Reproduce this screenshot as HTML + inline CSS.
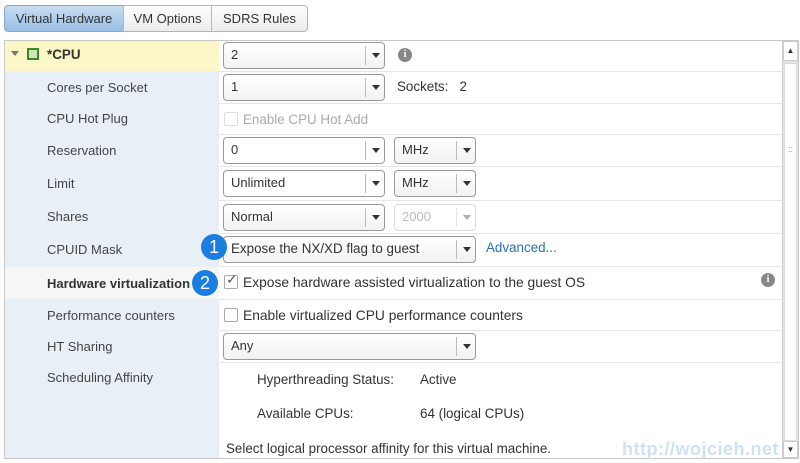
<!DOCTYPE html>
<html><head><style>
*{box-sizing:border-box;margin:0;padding:0}
body{width:800px;height:463px;background:#fff;font-family:"Liberation Sans",sans-serif;font-size:13.4px;color:#333;position:relative;overflow:hidden}
.a{position:absolute}
.tab{position:absolute;top:5px;height:27px;border:1px solid #b5b5b5;line-height:25px;text-align:center;font-size:13px;color:#333;background:linear-gradient(#fdfdfd,#ececec)}
.lab{position:absolute;left:47px;font-size:13px;color:#444}
.sel{position:absolute;height:27px;border:1px solid #9a9a9a;border-radius:4px;background:linear-gradient(#fff,#f2f2f2);padding-left:7px;line-height:24px;font-size:13px;color:#333}
.sel .ar{position:absolute;right:0;top:3px;bottom:3px;width:19px;border-left:1px solid #bbb}
.sel .ar:after{content:"";position:absolute;left:6px;top:7px;border-left:4px solid transparent;border-right:4px solid transparent;border-top:5px solid #333}
.hl{position:absolute;left:219px;right:18px;height:1px;background:#e6e6e6}
.cb{position:absolute;width:14px;height:14px;border:1px solid #aaa;border-radius:2px;background:#fff}
.bub{position:absolute;width:26px;height:26px;border-radius:50%;background:#1a7ee0;color:#fff;font-size:18px;text-align:center;line-height:26px}
.info{position:absolute;width:14px;height:14px;border-radius:50%;background:#888;color:#fff;font-size:10px;font-weight:bold;text-align:center;line-height:14px;font-family:"Liberation Serif",serif}
</style></head><body>
<div class="tab" style="left:4px;width:120px;background:linear-gradient(#c9def3,#97bde4);border-color:#8aa9c9;border-radius:4px 0 0 4px">Virtual Hardware</div>
<div class="tab" style="left:123px;width:89px">VM Options</div>
<div class="tab" style="left:211px;width:97px;border-radius:0 4px 4px 0">SDRS Rules</div>

<div class="a" style="left:4px;top:40px;width:795px;height:419px;border:1px solid #c8c8c8"></div>
<div class="a" style="left:5px;top:41px;width:214px;height:417px;background:#e9eff7"></div>
<div class="a" style="left:5px;top:41px;width:214px;height:30px;background:#fbf7c6"></div>
<div class="a" style="left:5px;top:267px;width:214px;height:32px;background:#f6f6f6"></div>
<div class="a" style="left:782px;top:41px;width:16px;height:417px;background:#e4e4e4;border-left:1px solid #ccc"></div>
<div class="a" style="left:783px;top:41px;width:15px;height:20px;background:#fff;border:1px solid #ccc;font-size:8px;text-align:center;line-height:18px">▲</div>
<div class="a" style="left:784px;top:63px;width:13px;height:378px;background:#fdfdfd;border:1px solid #ddd;font-size:9px;text-align:center;line-height:170px;color:#888">::</div>
<div class="a" style="left:783px;top:441px;width:15px;height:17px;background:#fff;border:1px solid #ccc;font-size:8px;text-align:center;line-height:15px">▼</div>

<div class="hl" style="top:71px"></div><div class="hl" style="top:103px"></div><div class="hl" style="top:134px"></div><div class="hl" style="top:166px"></div><div class="hl" style="top:200px"></div><div class="hl" style="top:233px"></div><div class="hl" style="top:266px"></div><div class="hl" style="top:299px"></div><div class="hl" style="top:330px"></div><div class="hl" style="top:362px"></div>

<div class="a" style="left:11px;top:51px;border-left:4px solid transparent;border-right:4px solid transparent;border-top:5px solid #777"></div>
<div class="a" style="left:27px;top:48px;width:12px;height:12px;border:2px solid #3a8a2a;background:#cde6b8"></div>
<div class="a" style="left:47px;top:47px;font-weight:bold;color:#333">*CPU</div>
<div class="sel" style="left:223px;top:42px;width:162px">2<div class="ar"></div></div>
<div class="info" style="left:398px;top:48px">i</div>

<div class="lab" style="top:80px">Cores per Socket</div>
<div class="sel" style="left:223px;top:74px;width:162px">1<div class="ar"></div></div>
<div class="a" style="left:397px;top:79px">Sockets:&nbsp;&nbsp; 2</div>

<div class="lab" style="top:111px">CPU Hot Plug</div>
<div class="cb" style="left:224px;top:112px;border-color:#ddd"></div>
<div class="a" style="left:243px;top:112px;color:#aaa">Enable CPU Hot Add</div>

<div class="lab" style="top:143px">Reservation</div>
<div class="sel" style="left:223px;top:137px;width:162px;background:#fff">0<div class="ar"></div></div>
<div class="sel" style="left:394px;top:137px;width:82px">MHz<div class="ar"></div></div>

<div class="lab" style="top:176px">Limit</div>
<div class="sel" style="left:223px;top:170px;width:162px;background:#fff">Unlimited<div class="ar"></div></div>
<div class="sel" style="left:394px;top:170px;width:82px">MHz<div class="ar"></div></div>

<div class="lab" style="top:209px">Shares</div>
<div class="sel" style="left:223px;top:204px;width:162px">Normal<div class="ar"></div></div>
<div class="sel" style="left:394px;top:204px;width:82px;color:#bbb;border-color:#ddd;background:#fff">2000<div class="ar" style="opacity:.4"></div></div>

<div class="lab" style="top:242px">CPUID Mask</div>
<div class="sel" style="left:223px;top:236px;width:253px;font-size:13.4px">Expose the NX/XD flag to guest<div class="ar"></div></div>
<div class="a" style="left:486px;top:240px;color:#2a6fb5">Advanced...</div>
<div class="bub" style="left:201px;top:234px">1</div>

<div class="lab" style="top:276px;font-weight:bold;color:#333">Hardware virtualization</div>
<div class="cb" style="left:224px;top:275px"></div>
<div class="a" style="left:226px;top:271px;font-size:14px;color:#555">✓</div>
<div class="a" style="left:243px;top:275px;font-size:13.8px">Expose hardware assisted virtualization to the guest OS</div>
<div class="bub" style="left:192px;top:270px">2</div>
<div class="info" style="left:761px;top:273px">i</div>

<div class="lab" style="top:308px">Performance counters</div>
<div class="cb" style="left:224px;top:308px"></div>
<div class="a" style="left:243px;top:308px;font-size:13.8px">Enable virtualized CPU performance counters</div>

<div class="lab" style="top:339px">HT Sharing</div>
<div class="sel" style="left:223px;top:333px;width:253px">Any<div class="ar"></div></div>

<div class="lab" style="top:370px">Scheduling Affinity</div>
<div class="a" style="left:257px;top:372px">Hyperthreading Status:</div>
<div class="a" style="left:420px;top:372px">Active</div>
<div class="a" style="left:257px;top:406px">Available CPUs:</div>
<div class="a" style="left:420px;top:406px">64 (logical CPUs)</div>
<div class="a" style="left:226px;top:441px">Select logical processor affinity for this virtual machine.</div>
<div class="a" style="left:622px;top:439px;font-family:'Liberation Sans',sans-serif;font-weight:bold;font-size:18px;color:#cfe1f0;letter-spacing:0.5px">http://wojcieh.net</div>
</body></html>
